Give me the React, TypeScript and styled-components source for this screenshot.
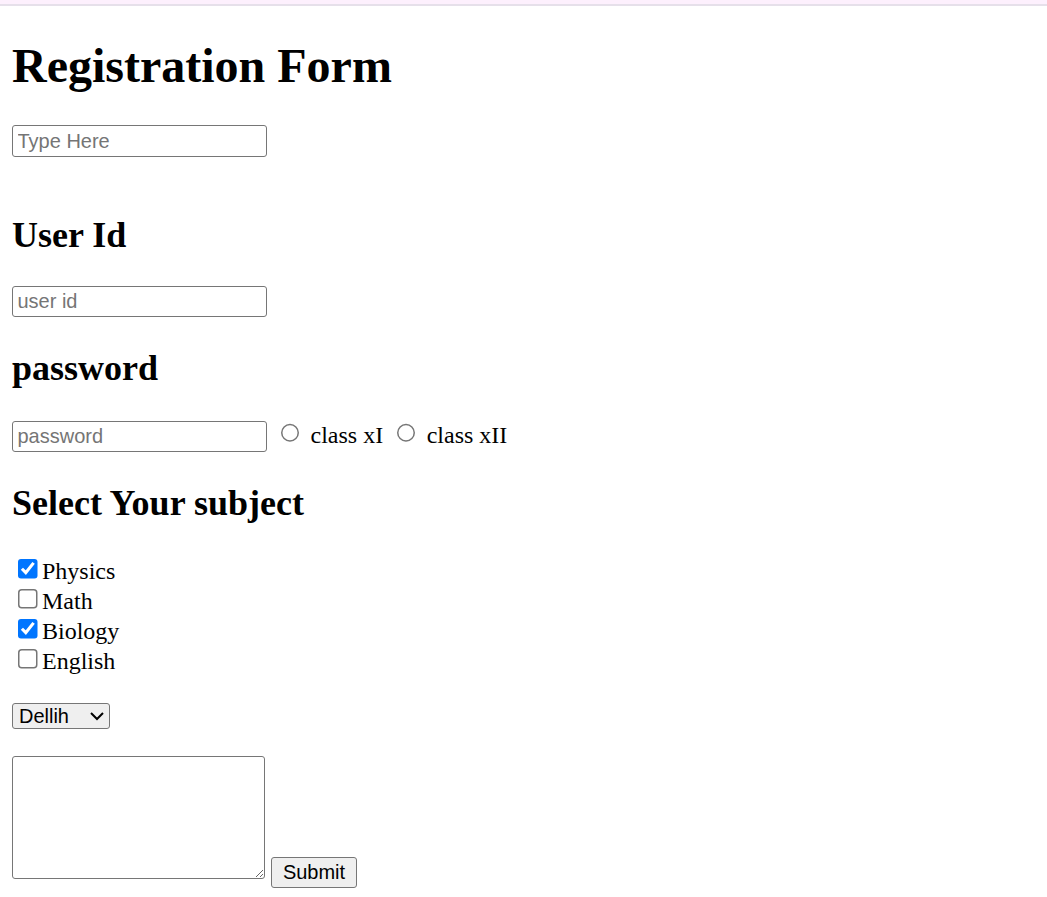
import React from "react";
import styled, { createGlobalStyle } from "styled-components";

const GlobalStyle = createGlobalStyle`
  html, body {
    margin: 0;
    padding: 0;
    background: #ffffff;
  }
  body {
    font-family: "Liberation Serif", "Times New Roman", serif;
    color: #000000;
  }
`;

const TopBar = styled.div`
  height: 4px;
  background: #fdf0fd;
  border-bottom: 2px solid #e6e0ea;
`;

const Page = styled.div`
  zoom: 1.5;
  margin: 8px;
  font-size: 16px;
`;

const Title = styled.h1`
  font-size: 2em;
  font-weight: bold;
  margin: 0.67em 0;
`;

const Heading = styled.h2<{ $extraBottom?: number }>`
  font-size: 1.5em;
  font-weight: bold;
  margin: 0.83em 0 calc(0.83em + ${(p) => p.$extraBottom ?? 0}px);
`;

const TextField = styled.input`
  box-sizing: border-box;
  width: 170px;
  height: 21px;
  padding: 1px 3px;
  border: 1px solid #767676;
  border-radius: 2px;
  font-family: "Liberation Sans", Arial, sans-serif;
  font-size: 13.333px;
  &::placeholder {
    color: #757575;
  }
`;

const Choice = styled.input`
  font-size: 13.333px;
`;

const CitySelect = styled.select`
  box-sizing: border-box;
  width: 65.3px;
  border: 1px solid #767676;
  border-radius: 2px;
  font-family: "Liberation Sans", Arial, sans-serif;
  font-size: 13.333px;
`;

const Notes = styled.textarea`
  box-sizing: border-box;
  width: 168.7px;
  height: 82px;
  border: 1px solid #767676;
  border-radius: 2px;
  font-family: "Liberation Mono", monospace;
  font-size: 13.333px;
`;

const SubmitButton = styled.button`
  box-sizing: border-box;
  width: 57.3px;
  height: 20.7px;
  padding: 1px 6px;
  border: 1px solid #767676;
  border-radius: 2px;
  background: #efefef;
  color: #000000;
  font-family: "Liberation Sans", Arial, sans-serif;
  font-size: 13.333px;
`;

const subjects = [
  { name: "Physics", checked: true },
  { name: "Math", checked: false },
  { name: "Biology", checked: true },
  { name: "English", checked: false },
];

export default function App() {
  return (
    <>
      <GlobalStyle />
      <TopBar />
      <Page>
        <Title>Registration Form</Title>
        <TextField type="text" placeholder="Type Here" />
        <br />
        <br />
        <Heading>User Id</Heading>
        <TextField type="text" placeholder="user id" />
        <Heading>password</Heading>
        <TextField type="password" placeholder="password" />{" "}
        <Choice type="radio" name="cls" /> class xI{" "}
        <Choice type="radio" name="cls" /> class xII
        <Heading $extraBottom={0.7}>Select Your subject</Heading>
        {subjects.map((s) => (
          <React.Fragment key={s.name}>
            <Choice type="checkbox" defaultChecked={s.checked} />
            {s.name}
            <br />
          </React.Fragment>
        ))}
        <br />
        <CitySelect defaultValue="Dellih">
          <option value="Dellih">Dellih</option>
          <option value="Mumbai">Mumbai</option>
          <option value="Kolkata">Kolkata</option>
        </CitySelect>
        <br />
        <br />
        <Notes rows={5} cols={20} /> <SubmitButton type="submit">Submit</SubmitButton>
      </Page>
    </>
  );
}
